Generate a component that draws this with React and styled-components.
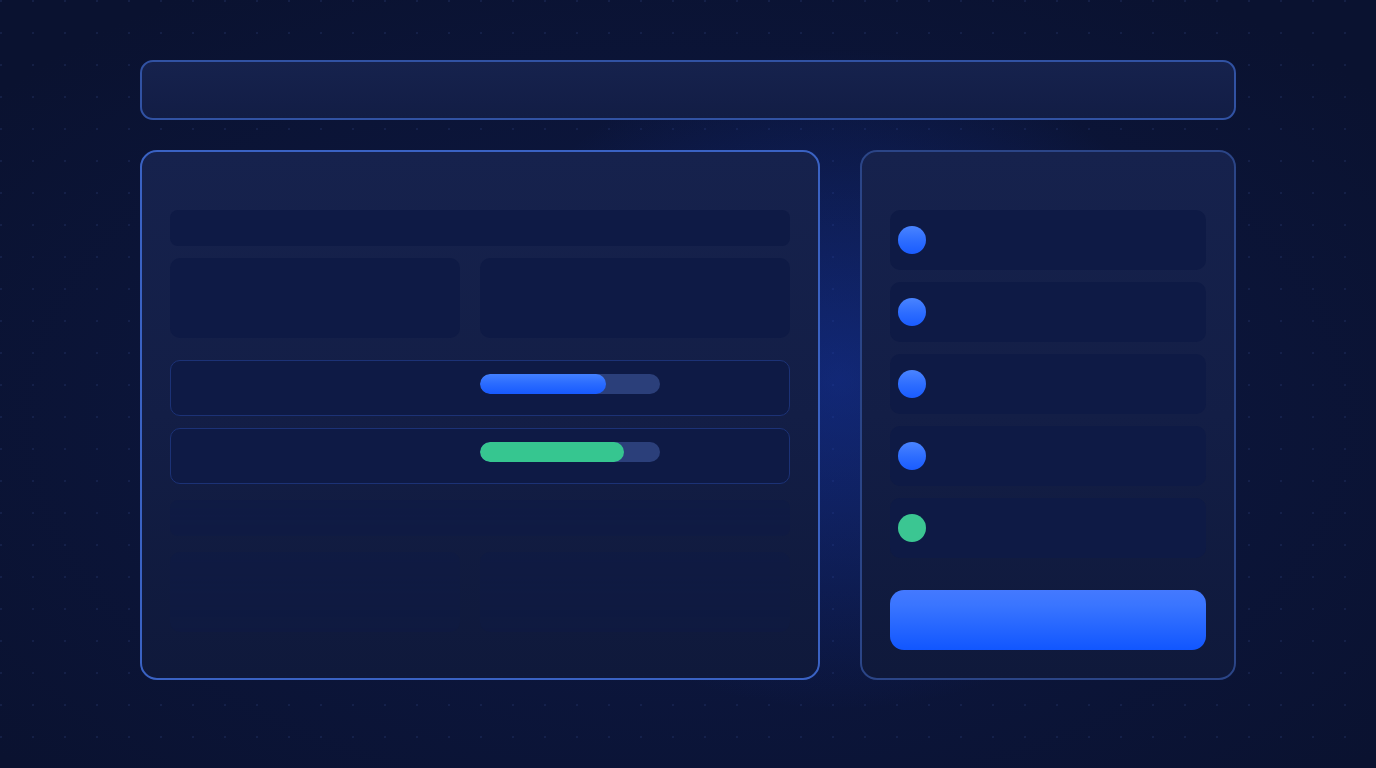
import React from "react";
import styled, { createGlobalStyle } from "styled-components";

const Global = createGlobalStyle`
  html, body { margin: 0; padding: 0; }
  body {
    background: #0a1230;
    font-family: "Inter", "Liberation Sans", sans-serif;
  }
`;

const Page = styled.div`
  position: relative;
  width: 1376px;
  height: 768px;
  box-sizing: border-box;
  padding: 60px 140px;
  display: flex;
  flex-direction: column;
  gap: 30px;
  overflow: hidden;
  background:
    radial-gradient(ellipse 380px 330px at 840px 380px, rgba(24, 62, 190, 0.42), rgba(24, 62, 190, 0) 100%),
    radial-gradient(ellipse 900px 520px at 50% 55%, rgba(20, 40, 120, 0.3), rgba(20, 40, 120, 0) 100%),
    radial-gradient(circle at 16px 16px, rgba(90, 120, 210, 0.13) 0.8px, rgba(0,0,0,0) 1.4px),
    #0a1230;
  background-size: 100% 100%, 100% 100%, 32px 32px, auto;
  background-position: 0 0, 0 0, -15px -15px, 0 0;
`;

const TopBar = styled.div`
  height: 60px;
  box-sizing: border-box;
  border: 2px solid #3152a3;
  border-radius: 13px;
  background: linear-gradient(180deg, #16224d 0%, #121d45 100%);
`;

const Main = styled.div`
  display: grid;
  grid-template-columns: 680px 376px;
  gap: 40px;
  height: 530px;
`;

const Panel = styled.div`
  box-sizing: border-box;
  border-radius: 17px;
  border: 2px solid ${(p) => (p.$bright ? "#3a62c3" : "#2b4587")};
  background: linear-gradient(180deg, #16224d 0%, #131e46 50%, #0f193b 100%);
  padding: 58px 28px 28px;
  display: flex;
  flex-direction: column;
`;

const Bar = styled.div`
  height: 36px;
  border-radius: 8px;
  background: #0e1a45;
  margin-bottom: ${(p) => p.$gap}px;
`;

const Pair = styled.div`
  display: grid;
  grid-template-columns: 290px 310px;
  gap: 20px;
  margin-bottom: ${(p) => p.$gap || 0}px;
`;

const Box = styled.div`
  height: 80px;
  border-radius: 10px;
  background: #0e1a45;
`;

const Faded = styled.div`
  display: flex;
  flex-direction: column;
  opacity: 0.6;
  -webkit-mask-image: linear-gradient(180deg, #000 0%, rgba(0,0,0,0.7) 100%);
  mask-image: linear-gradient(180deg, #000 0%, rgba(0,0,0,0.7) 100%);
`;

const ProgressRow = styled.div`
  height: 56px;
  box-sizing: border-box;
  border-radius: 10px;
  border: 1px solid #1c3276;
  background: #0e1a45;
  display: grid;
  grid-template-columns: 309px 1fr;
  align-items: start;
  padding-top: 13px;
  margin-bottom: ${(p) => p.$gap}px;
`;

const Track = styled.div`
  grid-column: 2;
  width: 180px;
  height: 20px;
  border-radius: 10px;
  background: #2b3f7a;
  overflow: hidden;
`;

const Fill = styled.div`
  height: 100%;
  border-radius: 10px;
  background: ${(p) =>
    p.$green
      ? "#36c690"
      : "linear-gradient(180deg, #4380ff 0%, #2a6bff 50%, #175aff 100%)"};
`;

const List = styled.div`
  display: flex;
  flex-direction: column;
  gap: 12px;
  margin-bottom: 32px;
`;

const Item = styled.div`
  height: 60px;
  border-radius: 10px;
  background: #0e1a45;
  display: flex;
  align-items: center;
  padding-left: 8px;
`;

const Dot = styled.div`
  width: 28px;
  height: 28px;
  border-radius: 50%;
  background: ${(p) =>
    p.$green ? "#3bc692" : "linear-gradient(180deg, #4a84ff 0%, #2c6cff 55%, #1a5cff 100%)"};
`;

const Button = styled.div`
  height: 60px;
  border-radius: 14px;
  background: linear-gradient(180deg, #4479ff 0%, #3a75ff 25%, #2767ff 60%, #1156ff 100%);
`;

const bars = [70, 80];
const items = [false, false, false, false, true];

export default function App() {
  return (
    <>
      <Global />
      <Page>
        <TopBar />
        <Main>
          <Panel $bright>
            <Bar $gap={12} />
            <Pair $gap={22}>
              <Box />
              <Box />
            </Pair>
            {bars.map((v, i) => (
              <ProgressRow key={i} $gap={i === 0 ? 12 : 16}>
                <Track>
                  <Fill $green={i === 1} style={{ width: `${v}%` }} />
                </Track>
              </ProgressRow>
            ))}
            <Faded>
              <Bar $gap={16} />
              <Pair>
                <Box />
                <Box />
              </Pair>
            </Faded>
          </Panel>
          <Panel>
            <List>
              {items.map((g, i) => (
                <Item key={i}>
                  <Dot $green={g} />
                </Item>
              ))}
            </List>
            <Button />
          </Panel>
        </Main>
      </Page>
    </>
  );
}
